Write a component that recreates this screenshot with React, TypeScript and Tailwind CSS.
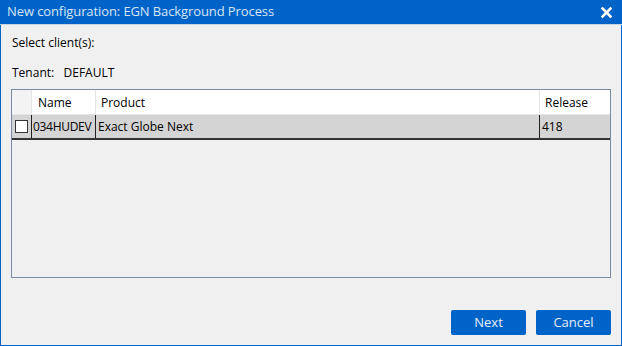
import React from 'react'

const font = { fontFamily: '"Open Sans", "Noto Sans", sans-serif' }

const App = () => {
    return (
        <div className="w-[622px] h-[346px] flex flex-col bg-[#0063c8] text-[#000]" style={font}>
            <div className="h-[25px] flex items-center justify-between pl-[7px] pr-[10px] border-b border-[#c9d3de]">
                <span className="text-[13px] text-[#d6e6f7] tracking-[-0.1px]">New configuration: EGN Background Process</span>
                <svg width="11" height="11" viewBox="0 0 11 11">
                    <path d="M1.5 1.5 L9.5 9.5 M9.5 1.5 L1.5 9.5" stroke="#fff" strokeWidth="2.6" strokeLinecap="square" />
                </svg>
            </div>
            <div className="flex-1 mx-[1px] mb-[1px] bg-[#f0f0f0] flex flex-col px-[10px]">
                <div className="text-[12px] mt-[10px] h-[16px] leading-[16px] pl-[1px]">Select client(s):</div>
                <div className="text-[12px] mt-[14px] h-[16px] leading-[16px] pl-[1px]">
                    Tenant:&nbsp;&nbsp;&nbsp;DEFAULT
                </div>
                <div className="mt-[8px] h-[189px] border border-[#7a8ca3] bg-[#f0f0f0] flex flex-col">
                    <div className="h-[25px] flex text-[12px] bg-white border-b border-[#e5e5e5]">
                        <div className="w-[20px] bg-[#f3f3f3] border-r border-[#e5e5e5]" />
                        <div className="w-[64px] border-r border-[#e5e5e5] flex items-center pl-[6px] pt-[1px]">Name</div>
                        <div className="flex-1 border-r border-[#e5e5e5] flex items-center pl-[5px] pt-[1px]">Product</div>
                        <div className="w-[70px] flex items-center pl-[5px] pt-[1px]">Release</div>
                    </div>
                    <div className="h-[25px] flex text-[12px] bg-[#d4d4d4] border-b-2 border-[#333]">
                        <div className="w-[20px] border-r border-[#222] flex items-center justify-center">
                            <div className="w-[13px] h-[13px] bg-white border border-[#333]" />
                        </div>
                        <div className="w-[64px] border-r border-[#222] flex items-center pl-[1px] tracking-[-0.3px]">034HUDEV</div>
                        <div className="flex-1 border-r border-[#222] flex items-center pl-[2px]">Exact Globe Next</div>
                        <div className="w-[70px] flex items-center pl-[2px]">418</div>
                    </div>
                </div>
                <div className="mt-auto mb-[10px] flex justify-end gap-[10px]">
                    <button className="w-[75px] h-[25px] bg-[#0063c8] text-[#e8f0fa] text-[13px] rounded-[2px]">Next</button>
                    <button className="w-[75px] h-[25px] bg-[#0063c8] text-[#e8f0fa] text-[13px] rounded-[2px]">Cancel</button>
                </div>
            </div>
        </div>
    )
}

export default App
